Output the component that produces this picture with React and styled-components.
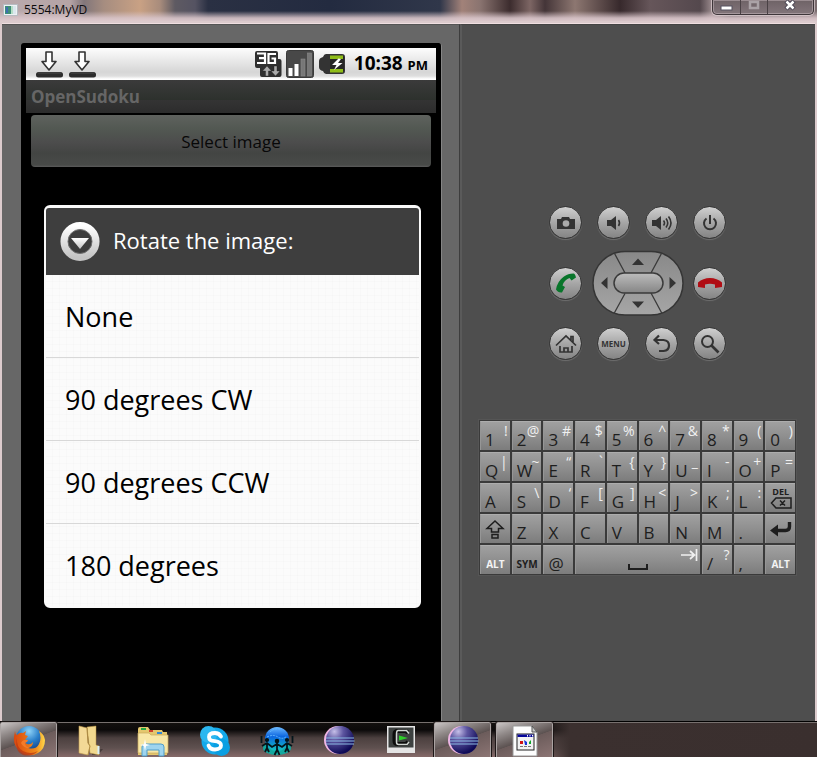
import React from "react";
import styled, { createGlobalStyle, css } from "styled-components";

const GlobalStyle = createGlobalStyle`
  * { box-sizing: border-box; }
  body { margin: 0; background: #000; font-family: "Open Sans", "Noto Sans", sans-serif; }
  button { font: inherit; color: inherit; border: 0; padding: 0; margin: 0; background: none; cursor: pointer; }
  svg { display: block; }
`;

const Desktop = styled.div`
  min-height: 100vh;
  display: flex;
  flex-direction: column;
  overflow: hidden;
`;

/* ---------- window frame ---------- */

const Window = styled.div`
  flex: 1;
  display: flex;
  flex-direction: column;
`;

const TitleBar = styled.header`
  height: 23px;
  display: flex;
  justify-content: space-between;
  align-items: flex-start;
  padding: 0 3px;
  background:
    linear-gradient(180deg, rgba(224, 206, 210, 0) 11px, rgba(216, 196, 201, 0.9) 18px, #e3d0d3 23px),
    linear-gradient(90deg, #b9a9ac 0, #b5a4a6 70px, #82767a 84px, #a68d80 104px, #c9a184 140px, #a88c7c 160px,
      #5e5a62 175px, #555362 195px, #2a3043 208px, #232b40 330px, #30374a 440px, #a28279 462px, #8a7470 480px,
      #3c2c2e 510px, #7d6664 530px, #443538 545px, #8d7771 575px, #37292c 620px, #66565a 650px, #54484d 700px, #9a8a8d 712px,
      #4e484d 730px, #7a6c6f 817px);
`;

const TitleText = styled.h1`
  display: flex;
  align-items: center;
  gap: 5px;
  height: 19px;
  margin: 0;
  font: 400 12px/19px "Open Sans", sans-serif;
  color: #0c0a0c;
`;

const WindowButtons = styled.div`
  display: flex;
  height: 15px;
  width: 102px;
  border: 1px solid #3e363a;
  border-top: 0;
  border-radius: 0 0 5px 5px;
  box-shadow: 0 0 0 1px rgba(235, 220, 224, 0.6), inset 0 0 0 1px rgba(220, 205, 210, 0.4);
  background: linear-gradient(180deg, #6e6266, #82757a);
`;

const WindowButton = styled.button`
  flex: ${(p) => p.$grow || 1};
  display: flex;
  justify-content: center;
  border-right: 1px solid #4a4145;
  &:last-child { border-right: 0; }
`;

const Body = styled.main`
  flex: 1;
  display: flex;
  margin: 0 2px;
  border-top: 1px solid #f0dfe1;
  outline: 2px solid #dccbcd;
`;

const DeviceSide = styled.section`
  flex: 0 0 458px;
  padding: 18px 17px 0 19px;
  display: flex;
  background: #676767;
  border-top: 1px solid #555;
  border-right: 1px solid #3d3d3d;
`;

const ControlSide = styled.section`
  flex: 1;
  display: flex;
  flex-direction: column;
  align-items: center;
  padding: 181px 2px 145px 0;
  gap: 60px;
  background: #4e4e4e;
  border-top: 1px solid #444;
  border-left: 2px solid #5a5a5a;
`;

/* ---------- phone screen ---------- */

const Bezel = styled.div`
  flex: 1;
  background: #000;
  border-radius: 3px 3px 0 0;
  border-right: 1px solid #858585;
  padding: 5px 5px 0;
`;

const StatusBar = styled.div`
  height: 32px;
  display: flex;
  align-items: center;
  gap: 4px;
  padding: 0 8px 0 9px;
  background: linear-gradient(180deg, #fdfdfd 0, #f0f0f0 8px, #d6d6d6 24px, #dedede 28px, #fff 31px);
`;

const Clock = styled.time`
  margin-left: 4px;
  font: 700 19px/32px "Open Sans", sans-serif;
  color: #000;
  white-space: nowrap;
`;

const Meridiem = styled.span`
  font-size: 13px;
`;

const Spacer = styled.span`
  flex: 1;
`;

const AppTitle = styled.h2`
  margin: 0;
  height: 33px;
  padding-left: 5px;
  font: 700 17px/33px "Open Sans", sans-serif;
  color: #666;
  background: linear-gradient(180deg, #3b3b3b 0, #2d312d 60%, #343434 61%, #2c2c2c);
`;

const SelectButton = styled.button`
  && {
    display: block;
    width: calc(100% - 10px);
    height: 52px;
    margin: 2px 5px 0;
    border-radius: 4px;
    font-size: 17px;
    color: #080808;
    background: linear-gradient(180deg, #5f625e 0, #525852 14px, #4c4c4c 28px, #434543 38px, #484a48 50px, #5c5c5c);
  }
`;

const Dialog = styled.div`
  margin: 38px 15px 0 18px;
  border: 2px solid #fafafa;
  border-top-width: 3px;
  border-radius: 6px;
  background: #fbfbfb;
`;

const DialogHeader = styled.header`
  height: 67px;
  display: flex;
  align-items: center;
  gap: 13px;
  padding: 0 14px;
  background: #3e3e3e;
  border-radius: 3px 3px 0 0;
`;

const DialogTitle = styled.h3`
  margin: 0;
  font: 400 22px/60px "Open Sans", sans-serif;
  padding-bottom: 4px;
  color: #fff;
`;

const OptionList = styled.ul`
  list-style: none;
  margin: 0;
  padding: 0;
  background:
    repeating-linear-gradient(90deg, transparent 0 6px, rgba(0, 0, 0, 0.012) 6px 7px),
    repeating-linear-gradient(180deg, transparent 0 6px, rgba(0, 0, 0, 0.012) 6px 7px);
`;

const OptionItem = styled.li`
  border-bottom: 1px solid #d8d8d8;
  &:last-child { border-bottom: 0; }
`;

const OptionButton = styled.button`
  && {
    width: 100%;
    height: 82px;
    padding: 1px 19px 0;
    text-align: left;
    font-size: 27px;
    line-height: 81px;
    color: #000;
  }
`;

/* ---------- hardware controls ---------- */

const PadGrid = styled.div`
  display: grid;
  grid-template-columns: repeat(4, 33px);
  grid-template-rows: 33px 64px 33px;
  column-gap: 15px;
  row-gap: 12px;
  align-items: center;
  justify-items: center;
`;

const RoundButton = styled.button`
  && {
    width: 33px;
    height: 33px;
    border-radius: 50%;
    display: flex;
    align-items: center;
    justify-content: center;
    font: 700 8px/32px "Open Sans", sans-serif;
    color: #333;
    background: linear-gradient(180deg, #d0d0d0 0, #a6a6a6 50%, #848484);
    border: 1px solid #353535;
    box-shadow: 0 1px 1px #6f6f6f;
  }
`;

const DpadCell = styled.div`
  grid-column: span 2;
`;

const Keyboard = styled.div`
  display: grid;
  width: 317px;
  grid-template-columns: repeat(10, 1fr);
  grid-auto-rows: 29px;
  column-gap: 2px;
  row-gap: 2px;
  padding: 1px;
  background: #3a3a3a;
  box-shadow: 0 0 0 1px #555;
`;

const keyAlign = {
  corner: css`align-items: flex-end; justify-content: flex-start; padding-left: 4px;`,
  center: css`align-items: center; justify-content: center;`,
  low: css`align-items: flex-end; justify-content: center;`,
};

const Key = styled.button`
  && {
    position: relative;
    min-width: 0;
    grid-column: span ${(p) => p.$span || 1};
    display: flex;
    ${(p) => keyAlign[p.$align || "corner"]}
    font: ${(p) => (p.$word ? "700 10px/20px" : "400 17px/21px")} "Open Sans", sans-serif;
    color: ${(p) => (p.$light ? "#f4f4f4" : "#1e1e1e")};
    background: linear-gradient(180deg, #a0a0a0 0, #8f8f8f 50%, #7c7c7c);
    border-top: 1px solid #adadad;
    border-left: 1px solid #969696;
  }
`;

const AltGlyph = styled.span`
  position: absolute;
  top: 0;
  right: 2px;
  font-size: 14px;
  line-height: 17px;
  color: #f0f0f0;
`;

const DelStack = styled.span`
  display: flex;
  flex-direction: column;
  align-items: center;
  font: 700 9px/10px "Open Sans", sans-serif;
`;

/* ---------- taskbar ---------- */

const TaskBar = styled.nav`
  height: 36px;
  display: flex;
  gap: 5px;
  border-top: 1px solid #000;
  box-shadow: inset 0 1px 0 #77706e;
  background:
    linear-gradient(90deg, rgba(59, 48, 47, 0) 540px, #3b302f 570px, #3a2f2e),
    linear-gradient(180deg, #14110f 0, #0c0a0a 8px, #4c403f 16px, #5f5150 26px, #866a69 35px);
`;

const TaskButton = styled.button`
  && {
    flex: 0 0 57px;
    display: flex;
    justify-content: center;
    padding-top: 3px;
    ${(p) =>
      p.$active &&
      css`
        background: linear-gradient(160deg, #c9c4c4 0, #8f8887 25%, #5c5251 50%, #6c5c5b 51%, #8c7574);
        border: 1px solid #aaa3a2;
        border-bottom: 0;
        border-radius: 2px 2px 0 0;
        outline: 1px solid #1c1616;
        padding-top: 2px;
      `}
  }
`;

/* ---------- drawings ---------- */

const AppIcon = () => (
  <svg width="16" height="12" viewBox="0 0 16 12" aria-hidden="true">
    <rect x=".5" y=".5" width="14" height="11" fill="#eef2f4" stroke="#b7bcc2" />
    <rect x="2" y="2" width="6" height="8" fill="#3f8f78" />
    <rect x="3" y="3" width="2" height="6" fill="#3e6fae" />
    <rect x="8" y="2" width="2" height="8" fill="#b5ddc6" />
    <rect x="10" y="2" width="3" height="8" fill="#dbe7ee" />
  </svg>
);

const DownloadIcon = () => (
  <svg width="29" height="30" viewBox="0 0 29 30" aria-hidden="true">
    <path d="M11 3h6v9.500h4L14 21l-7-8.500h4z" fill="#fff" stroke="#333" strokeWidth="1.600" strokeLinejoin="round" />
    <rect x="1" y="23" width="27" height="5.500" rx="2.500" fill="#2c2c2c" />
    <path d="M3 24h23" stroke="#4a4a4a" />
  </svg>
);

const NetworkIcon = () => (
  <svg width="28" height="28" viewBox="0 0 28 28" aria-hidden="true">
    <path d="M3 1h19q2 0 2 2v6h1.500q2 0 2 2v14q0 2-2 2H8q-2 0-2-2v-7H3q-2 0-2-2V3q0-2 2-2z" fill="#2f2f2f" />
    <path d="M3 3.500h8v9.500H3M5 8.200h6M22 4h-7.500v9H21V8.500h-3.500" fill="none" stroke="#fff" strokeWidth="2.200" />
    <path d="M13 16l4.500 5h-3v5h-3v-5h-3zM21.500 26l-4.500-5h3v-5h3v5h3z" fill="#aaa" stroke="#222" strokeWidth=".4" />
  </svg>
);

const SignalIcon = () => (
  <svg width="28" height="28" viewBox="0 0 28 28" aria-hidden="true">
    <rect x=".5" y=".5" width="27" height="27" rx="2" fill="#484848" stroke="#3a3a3a" />
    <rect x="2.500" y="18" width="4" height="8" fill="#fff" />
    <rect x="8.500" y="14" width="4" height="12" fill="#fff" />
    <rect x="15" y="9" width="4" height="17" fill="#777" stroke="#8b8b8b" strokeWidth=".6" />
    <rect x="21.500" y="3" width="4" height="23" fill="#777" stroke="#8b8b8b" strokeWidth=".6" />
  </svg>
);

const BatteryIcon = () => (
  <svg width="28" height="22" viewBox="0 0 28 22" aria-hidden="true">
    <path d="M8 1h16q3 0 3 3v14q0 3-3 3H8q-2 0-3-3-4-1-4-4V8q0-3 4-4 1-3 3-3z" fill="#333" />
    <path d="M12 3h12q2 0 2 2v12q0 2-2 2H12V5z" fill="#262626" />
    <path d="M12 2.500h13V6H12zM12 16h13v3.500H12z" fill="#8fbd18" />
    <path d="M20.500 5.500L14 12h4.500L16 17l8.500-7H20l3-4z" fill="#fff" />
  </svg>
);

const DialogIcon = () => (
  <svg width="40" height="41" viewBox="0 0 40 41" aria-hidden="true">
    <defs>
      <linearGradient id="ring" x1="0" y1="0" x2="0" y2="1">
        <stop offset="0" stopColor="#fff" />
        <stop offset="1" stopColor="#c4c4c4" />
      </linearGradient>
    </defs>
    <circle cx="20" cy="20.500" r="15.800" fill="#3d3d3d" stroke="url(#ring)" strokeWidth="7.500" />
    <circle cx="20" cy="20.500" r="12" fill="none" stroke="#707070" strokeWidth="1" />
    <path d="M11 17h18l-9 11z" fill="url(#ring)" />
  </svg>
);

const padIcons = {
  camera: (
    <svg width="20" height="16" viewBox="0 0 20 16">
      <path d="M6 2h7l1 2h5v10H1V4h4z" fill="#333" />
      <circle cx="10" cy="8.500" r="3.300" fill="#aaa" />
    </svg>
  ),
  volumeDown: (
    <svg width="20" height="18" viewBox="0 0 20 18">
      <path d="M3 6h4l5-4v14l-5-4H3z" fill="#333" />
      <path d="M14.500 6q2 3 0 6" fill="none" stroke="#333" strokeWidth="1.600" />
    </svg>
  ),
  volumeUp: (
    <svg width="22" height="18" viewBox="0 0 22 18">
      <path d="M1 6h4l5-4v14l-5-4H1z" fill="#333" />
      <path d="M12.500 6.500q2 2.500 0 5M15 4.500q3.500 4.500 0 9M17.500 2.500q5 6.500 0 13" fill="none" stroke="#333" strokeWidth="1.600" />
    </svg>
  ),
  power: (
    <svg width="18" height="18" viewBox="0 0 18 18">
      <path d="M9 1v9M5.500 4.500a6 6 0 1 0 7 0" fill="none" stroke="#333" strokeWidth="2" />
    </svg>
  ),
  call: (
    <svg width="22" height="22" viewBox="0 0 22 22">
      <path d="M1 17.500Q2.500 9 9 4.500q4-3 9.500-3 1.500 0 2.500 4l-4.500 3-2-2.500Q9 8 7.500 13.500l2.500 1.500-3 5.500Q3 21 1 17.500z" fill="#08752a" />
    </svg>
  ),
  end: (
    <svg width="26" height="14" viewBox="0 0 26 14">
      <path d="M1 11V6.500Q6 2 13 2t12 4.500V11l-7 1V8.500Q13 7 8 8.500V12z" fill="#b00d14" />
    </svg>
  ),
  home: (
    <svg width="22" height="20" viewBox="0 0 22 20">
      <path d="M1 11.500L11 2l10 9.500M16 6V2.500h2V8M5 12v6h12v-6M9 18v-4h4v4" fill="none" stroke="#333" strokeWidth="1.700" />
    </svg>
  ),
  back: (
    <svg width="20" height="20" viewBox="0 0 20 20">
      <path d="M7 1.500L2.500 6 7 10M3 6h8.500q5.500.5 5.500 5.500T11.500 17H7" fill="none" stroke="#333" strokeWidth="2.200" />
    </svg>
  ),
  search: (
    <svg width="20" height="20" viewBox="0 0 20 20">
      <circle cx="7.500" cy="7.500" r="5.500" fill="none" stroke="#333" strokeWidth="2" />
      <path d="M11.500 11.500l7 7" stroke="#333" strokeWidth="2.600" />
    </svg>
  ),
};

const Dpad = () => (
  <svg width="92" height="66" viewBox="0 0 92 66" role="group" aria-label="Directional pad">
    <defs>
      <linearGradient id="pad" x1="0" y1="0" x2="0" y2="1">
        <stop offset="0" stopColor="#888" />
        <stop offset="1" stopColor="#a6a6a6" />
      </linearGradient>
      <linearGradient id="ok" x1="0" y1="0" x2="0" y2="1">
        <stop offset="0" stopColor="#bdbdbd" />
        <stop offset="1" stopColor="#858585" />
      </linearGradient>
    </defs>
    <rect x="1" y="1.500" width="90" height="63.500" rx="32" ry="31.700" fill="url(#pad)" stroke="#353535" strokeWidth="1.500" />
    <path d="M22 2.500L33 23M70 2.500L59 23M22 63.500l11-20M70 63.500L59 43" stroke="#3a3a3a" strokeWidth="1.300" />
    <rect x="22" y="23" width="49" height="20" rx="10" fill="url(#ok)" stroke="#3a3a3a" strokeWidth="1.500" />
    <path d="M46 8.500l6 6.500H40zM46 58l6-6.500H40zM9 33l6.500-6v12zM84 33l-6.500-6v12z" fill="#333" />
  </svg>
);

const ShiftGlyph = () => (
  <svg width="20" height="20" viewBox="0 0 20 20">
    <path d="M10 2l8 7.500h-4.500V13h-7V9.500H2zM7 15.500h6V19H7z" fill="none" stroke="#1e1e1e" strokeWidth="1.500" />
  </svg>
);

const DeleteGlyph = () => (
  <svg width="22" height="12" viewBox="0 0 22 12">
    <path d="M6 1h15v10H6L1.500 6zM10 3.500l5 5M15 3.500l-5 5" fill="none" stroke="#1e1e1e" strokeWidth="1.500" />
  </svg>
);

const EnterGlyph = () => (
  <svg width="24" height="18" viewBox="0 0 24 18">
    <path d="M20.500 2v4.500q0 4-4 4H7" fill="none" stroke="#1e1e1e" strokeWidth="3.400" />
    <path d="M9 4.500v12L1 10.500z" fill="#1e1e1e" />
  </svg>
);

const SpaceGlyph = () => (
  <svg width="22" height="12" viewBox="0 0 22 12">
    <path d="M2 2v5h18V2" fill="none" stroke="#1e1e1e" strokeWidth="2" />
  </svg>
);

const TabGlyph = () => (
  <svg width="18" height="18" viewBox="0 0 18 18">
    <path d="M1 9h13M10 5l4.500 4-4.500 4M16.500 3v12" fill="none" stroke="#f0f0f0" strokeWidth="1.700" />
  </svg>
);

const Firefox = () => (
  <svg width="34" height="32" viewBox="0 0 34 32">
    <defs>
      <radialGradient id="globe" cx=".5" cy=".2" r=".8">
        <stop offset="0" stopColor="#8fd3f7" />
        <stop offset=".5" stopColor="#2a7fc9" />
        <stop offset="1" stopColor="#123a80" />
      </radialGradient>
      <linearGradient id="tail" x1="0" y1="0" x2="1" y2="0">
        <stop offset="0" stopColor="#d9480f" />
        <stop offset=".7" stopColor="#f08a1c" />
        <stop offset="1" stopColor="#ffd84a" />
      </linearGradient>
    </defs>
    <circle cx="17" cy="14" r="13" fill="url(#globe)" />
    <path d="M3 6q0 3 2 4 3-3 6-2l3-2-1 4 3 1-3 4q-1 3 2 4 4 1 6-2 0 5-5 6 8 2 11-4 3-6 0-13 5 3 6 9 0 9-7 13-9 5-17-1Q1 21 2 12z" fill="url(#tail)" />
    <path d="M5 13q-1 9 6 13 8 4 15 0-6 6-15 4Q2 26 5 13z" fill="#b93413" opacity=".7" />
    <path d="M9 18q3 6 9 5-5-1-5-5 3-1 3-3-5-1-7 3z" fill="#f47b2a" />
  </svg>
);

const Folder = () => (
  <svg width="26" height="31" viewBox="0 0 26 31">
    <path d="M15 25l10-1-5 6h-6z" fill="#201b1a" opacity=".5" />
    <path d="M9 2l9-1v19l3 1v9l-9-2z" fill="#f1d88e" stroke="#b8923f" strokeWidth=".5" />
    <path d="M1 1l8 2 1 15 2 3-2 9-9-2z" fill="#f3d996" stroke="#c6a04f" strokeWidth=".6" />
    <path d="M9 3l1 15 2 3-2 9" fill="none" stroke="#a9863f" strokeWidth=".8" />
    <path d="M19.500 21h2v8h-2z" fill="#d8eff8" />
  </svg>
);

const Explorer = () => (
  <svg width="34" height="32" viewBox="0 0 34 32">
    <path d="M2 4q0-2 2-2h8l2 3h12l1 2h4v23H2z" fill="#e4c76e" />
    <path d="M5 3h5v2H5z" fill="#25a844" />
    <path d="M13 5h4v2h-4z" fill="#cf3f2c" />
    <path d="M21 7h5v2h-5z" fill="#2f87d6" />
    <path d="M2 8h11l2 2h17v18H2z" fill="#f8e7a6" stroke="#c9a95b" strokeWidth=".7" />
    <path d="M6 31V22q0-3 3-3h16q3 0 3 3v9h-5v-6H11v6z" fill="#9ed4ee" stroke="#4f9dc9" />
    <path d="M9 14l1 5 4 1-4 1-1 5-1-5-4-1 4-1z" fill="#fff" />
  </svg>
);

const Skype = () => (
  <svg width="32" height="32" viewBox="0 0 32 32">
    <circle cx="16" cy="16" r="13.500" fill="#13a9ea" />
    <circle cx="9.500" cy="9.500" r="8.500" fill="#2cb7f0" />
    <circle cx="22.500" cy="22.500" r="8.500" fill="#0a9fe2" />
    <path d="M22 11.500Q20 8 16 8q-6 0-6 4t6 4.200q6 .8 6 4.300T16 24.500q-5 0-6.500-4" fill="none" stroke="#fff" strokeWidth="3.800" strokeLinecap="round" />
  </svg>
);

const GlobePeople = () => (
  <svg width="34" height="32" viewBox="0 0 34 32">
    <defs>
      <linearGradient id="sphere" x1="0" y1="0" x2="0" y2="1">
        <stop offset="0" stopColor="#6db9ff" />
        <stop offset=".4" stopColor="#0c66e0" />
        <stop offset="1" stopColor="#15c4bf" />
      </linearGradient>
    </defs>
    <ellipse cx="17" cy="23" rx="14" ry="7" fill="#12a89e" />
    <circle cx="17" cy="14" r="12" fill="url(#sphere)" />
    <path d="M10 7q4-4 10-3M7 12q6-3 11 0t9-1" stroke="#62b8ff" strokeDasharray="2 1" fill="none" />
    <g fill="#03151b" stroke="#03151b" strokeWidth="1.800">
      <circle cx="17" cy="16" r="1.400" /><circle cx="7" cy="15" r="1.200" /><circle cx="27" cy="15" r="1.200" />
      <path d="M17 18v7l-2.500 5M17 24l2.500 6M17 19l-5 3-5-4-5 3M17 19l5 3 5-4 5 3M7 18v5l-2 4M7 23l2 4M27 18v5l-2 4M27 23l2 4M1.500 11v7M32.500 11v7" fill="none" />
    </g>
  </svg>
);

const Eclipse = ({ id }) => (
  <svg width="32" height="30" viewBox="0 0 32 30">
    <defs>
      <radialGradient id={id} cx=".3" cy=".2" r=".8">
        <stop offset="0" stopColor="#c5bfe8" />
        <stop offset=".4" stopColor="#5d55a0" />
        <stop offset="1" stopColor="#0e0a56" />
      </radialGradient>
    </defs>
    <circle cx="15" cy="15" r="14" fill="#f0b6e4" />
    <circle cx="17" cy="15" r="14" fill={`url(#${id})`} />
    <path d="M3 13h28M2.500 16h29M3 19h28" stroke="#8cb9e4" strokeWidth="1.200" />
  </svg>
);

const Camtasia = () => (
  <svg width="28" height="28" viewBox="0 0 28 28">
    <rect width="28" height="27" y="1" fill="#e4e4e4" />
    <rect x="1.500" y="2.500" width="25" height="20" fill="#3d4140" />
    <path d="M21 7.500L18.500 6H11Q7.500 6 7.500 9v7q0 3 3 3H19l2-2" fill="none" stroke="#0c0c0c" strokeWidth="4" />
    <path d="M22 8.500L19.500 5.500H11q-1.500 0-1.500 3.500v8q0 2.500 2 2.500H20l2-2.500" fill="none" stroke="#cfd5d1" strokeWidth="1.500" />
    <path d="M12 10.500l9 2.500-9 2.500z" fill="#2fcf2a" />
  </svg>
);

const DocumentIcon = () => (
  <svg width="28" height="32" viewBox="0 0 28 32">
    <path d="M2 1h19l5 6v24H2z" fill="#fdfdfd" stroke="#999" />
    <path d="M21 1l5 6h-5z" fill="#c9c9c9" stroke="#555" />
    <rect x="6" y="9" width="17" height="16" fill="#f2f2f2" stroke="#222" />
    <path d="M6.500 9.500h16V12h-16z" fill="#06069a" />
    <path d="M16 10h1v1.500h-1zM18.500 10h1v1.500h-1zM21 10h1v1.500h-1z" fill="#fff" />
    <path d="M9 16h3v3H9z" fill="#d01414" />
    <path d="M13 15l3 2v3h-2z" fill="#1934d8" />
    <path d="M18 17l2-2v4h-2z" fill="#10a52c" />
    <path d="M9 21.500h12" stroke="#777" strokeDasharray="3 1" />
  </svg>
);

/* ---------- data ---------- */

const options = ["None", "90 degrees CW", "90 degrees CCW", "180 degrees"];

const keyRows = [
  ["1!", "2@", "3#", "4$", "5%", "6^", "7&", "8*", "9(", "0)"],
  ["Q|", "W~", "E“", "R`", "T{", "Y}", "U_", "I-", "O+", "P="],
  ["A", "S\\", "D‘", "F[", "G]", "H<", "J>", "K;", "L:"],
];

const PadButton = ({ label, icon }) => (
  <RoundButton type="button" aria-label={label}>
    {icon ? padIcons[icon] : label}
  </RoundButton>
);

const LetterKey = ({ pair }) => (
  <Key type="button">
    {pair[0]}
    {pair[1] && <AltGlyph>{pair[1]}</AltGlyph>}
  </Key>
);

const tasks = [
  { label: "Firefox", icon: <Firefox />, active: true },
  { label: "Folder", icon: <Folder /> },
  { label: "Explorer", icon: <Explorer /> },
  { label: "Skype", icon: <Skype /> },
  { label: "Community", icon: <GlobePeople /> },
  { label: "Eclipse", icon: <Eclipse id="eclipseA" /> },
  { label: "Recorder", icon: <Camtasia /> },
  { label: "Eclipse window", icon: <Eclipse id="eclipseB" />, active: true },
  { label: "Emulator", icon: <DocumentIcon />, active: true },
];

export default function App() {
  return (
    <Desktop>
      <GlobalStyle />
      <Window>
        <TitleBar>
          <TitleText>
            <AppIcon />
            5554:MyVD
          </TitleText>
          <WindowButtons>
            <WindowButton type="button" aria-label="Minimize" $grow={28}>
              <svg width="13" height="12" viewBox="0 0 13 12"><rect x="1" y="6" width="11" height="4" fill="#fff" stroke="#54505f" /></svg>
            </WindowButton>
            <WindowButton type="button" aria-label="Maximize" $grow={27}>
              <svg width="12" height="12" viewBox="0 0 12 12"><rect x="2" y="2" width="8" height="6" fill="none" stroke="#aaa2a6" strokeWidth="2.500" /></svg>
            </WindowButton>
            <WindowButton type="button" aria-label="Close" $grow={47}>
              <svg width="12" height="12" viewBox="0 0 12 12">
                <path d="M2 1l8 8M10 1L2 9" stroke="#4a4655" strokeWidth="4.500" />
                <path d="M2.500 1.500l7 7M9.500 1.500l-7 7" stroke="#fff" strokeWidth="2.500" />
              </svg>
            </WindowButton>
          </WindowButtons>
        </TitleBar>
        <Body>
          <DeviceSide>
            <Bezel>
              <StatusBar>
                <DownloadIcon />
                <DownloadIcon />
                <Spacer />
                <NetworkIcon />
                <SignalIcon />
                <BatteryIcon />
                <Clock>10:38 <Meridiem>PM</Meridiem></Clock>
              </StatusBar>
              <AppTitle>OpenSudoku</AppTitle>
              <SelectButton type="button">Select image</SelectButton>
              <Dialog role="dialog" aria-labelledby="rotate-title">
                <DialogHeader>
                  <DialogIcon />
                  <DialogTitle id="rotate-title">Rotate the image:</DialogTitle>
                </DialogHeader>
                <OptionList>
                  {options.map((o) => (
                    <OptionItem key={o}>
                      <OptionButton type="button">{o}</OptionButton>
                    </OptionItem>
                  ))}
                </OptionList>
              </Dialog>
            </Bezel>
          </DeviceSide>
          <ControlSide>
            <PadGrid>
              <PadButton label="Camera" icon="camera" />
              <PadButton label="Volume down" icon="volumeDown" />
              <PadButton label="Volume up" icon="volumeUp" />
              <PadButton label="Power" icon="power" />
              <PadButton label="Call" icon="call" />
              <DpadCell><Dpad /></DpadCell>
              <PadButton label="End call" icon="end" />
              <PadButton label="Home" icon="home" />
              <PadButton label="MENU" />
              <PadButton label="Back" icon="back" />
              <PadButton label="Search" icon="search" />
            </PadGrid>
            <Keyboard>
              {keyRows.flat().map((pair) => (
                <LetterKey key={pair} pair={pair} />
              ))}
              <Key type="button" $align="center" aria-label="Delete">
                <DelStack>DEL<DeleteGlyph /></DelStack>
              </Key>
              <Key type="button" $align="center" aria-label="Shift"><ShiftGlyph /></Key>
              {["Z", "X", "C", "V", "B", "N", "M", "."].map((k) => (
                <LetterKey key={k} pair={k} />
              ))}
              <Key type="button" $align="center" aria-label="Enter"><EnterGlyph /></Key>
              <Key type="button" $align="low" $word $light>ALT</Key>
              <Key type="button" $align="low" $word>SYM</Key>
              <LetterKey pair="@" />
              <Key type="button" $span={4} $align="low" aria-label="Space">
                <SpaceGlyph />
                <AltGlyph><TabGlyph /></AltGlyph>
              </Key>
              <LetterKey pair="/?" />
              <LetterKey pair="," />
              <Key type="button" $align="low" $word $light>ALT</Key>
            </Keyboard>
          </ControlSide>
        </Body>
      </Window>
      <TaskBar>
        {tasks.map((t) => (
          <TaskButton key={t.label} type="button" aria-label={t.label} $active={t.active}>
            {t.icon}
          </TaskButton>
        ))}
      </TaskBar>
    </Desktop>
  );
}
